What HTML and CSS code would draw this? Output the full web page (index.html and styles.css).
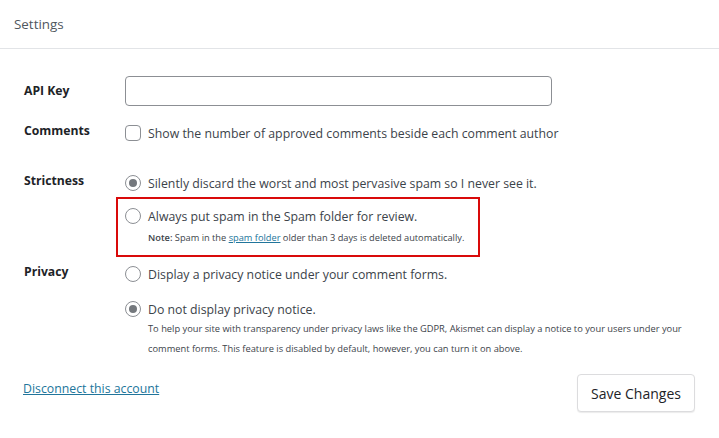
FILE: index.html
```html
<!DOCTYPE html>
<html lang="en">
<head>
<meta charset="utf-8">
<title>Settings</title>
<link rel="stylesheet" href="styles.css">
</head>
<body>
<div class="panel">
  <div class="panel-head">Settings</div>
  <form class="form">
    <div class="row row-api">
      <div class="label">API Key</div>
      <div class="field"><input class="text-input" type="text" aria-label="API Key"></div>
    </div>
    <div class="row row-comments">
      <div class="label">Comments</div>
      <div class="field">
        <label class="option"><span class="checkbox"></span><span class="txt">Show the number of approved comments beside each comment author</span></label>
      </div>
    </div>
    <div class="row row-strict">
      <div class="label">Strictness</div>
      <div class="field">
        <label class="option"><span class="radio checked"></span><span class="txt">Silently discard the worst and most pervasive spam so I never see it.</span></label>
        <div class="highlight">
          <label class="option"><span class="radio"></span><span class="txt">Always put spam in the Spam folder for review.</span></label>
          <p class="note"><strong>Note:</strong> Spam in the <a href="#">spam folder</a> older than 3 days is deleted automatically.</p>
        </div>
      </div>
    </div>
    <div class="row row-privacy">
      <div class="label">Privacy</div>
      <div class="field">
        <label class="option"><span class="radio"></span><span class="txt">Display a privacy notice under your comment forms.</span></label>
        <label class="option option-second"><span class="radio checked"></span><span class="txt">Do not display privacy notice.</span></label>
        <p class="desc">To help your site with transparency under privacy laws like the GDPR, Akismet can display a notice to your users under your comment forms. This feature is disabled by default, however, you can turn it on above.</p>
      </div>
    </div>
    <div class="footer">
      <a class="disconnect" href="#">Disconnect this account</a>
      <button class="save" type="button">Save Changes</button>
    </div>
  </form>
</div>
</body>
</html>
```

FILE: styles.css
```css
html, body {
  margin: 0;
  padding: 0;
  background: #ffffff;
}
body {
  font-family: "Open Sans", "Noto Sans", sans-serif;
  font-size: 12.3px;
  color: #3c434a;
  width: 719px;
  height: 438px;
  overflow: hidden;
}
.panel-head {
  height: 48px;
  line-height: 48px;
  padding-left: 14px;
  border-bottom: 1px solid #e2e4e7;
  color: #50575e;
  font-size: 13.4px;
}
.form {
  margin: 0;
  padding: 0 0 0 24px;
}
.row {
  display: grid;
  grid-template-columns: 101px 1fr;
}
.label {
  font-weight: 700;
  color: #1d2327;
  line-height: 16px;
  font-size: 12.2px;
}
.row-api {
  margin-top: 27px;
  align-items: center;
}
.row-api .label {
  line-height: 30px;
  margin-top: -1px;
}
.text-input {
  display: block;
  box-sizing: border-box;
  width: 427px;
  height: 30px;
  margin: 0;
  border: 1px solid #8c8f94;
  border-radius: 4px;
  background: #fff;
}
.row-comments { margin-top: 17px; }
.row-strict { margin-top: 30px; }
.row-privacy { margin-top: 7px; }
.option {
  display: flex;
  align-items: center;
  gap: 7px;
  line-height: 20px;
  height: 20px;
  white-space: nowrap;
}
.txt {
  line-height: 18px;
  padding-top: 2px;
}
.checkbox {
  box-sizing: border-box;
  width: 16px;
  height: 16px;
  border: 1px solid #8c8f94;
  border-radius: 4px;
  flex: none;
}
.radio {
  box-sizing: border-box;
  width: 16px;
  height: 16px;
  border: 1px solid #8c8f94;
  border-radius: 50%;
  flex: none;
  display: flex;
  align-items: center;
  justify-content: center;
}
.radio.checked::after {
  content: "";
  width: 8px;
  height: 8px;
  border-radius: 50%;
  background: #74787d;
}
.highlight {
  margin: 4px 0 0 -9px;
  width: 353px;
  border: 2px solid #d90a0a;
  padding: 7px 0 8px 7px;
}
.note {
  margin: 3px 0 0 23px;
  font-size: 9.25px;
  line-height: 18px;
  color: #3c434a;
  white-space: nowrap;
}
.note strong { font-weight: 600; }
.note a, .disconnect { color: #21759b; }
.option-second { margin-top: 15px; }
.desc {
  margin: 0 0 0 23px;
  font-size: 9.3px;
  line-height: 20px;
  color: #3c434a;
  width: 540px;
}
.footer {
  display: flex;
  justify-content: space-between;
  align-items: flex-start;
  margin-top: 15px;
  padding-right: 24px;
  margin-left: -1px;
}
.disconnect {
  margin-top: 5px;
  line-height: 20px;
  font-size: 12.3px;
}
.save {
  box-sizing: border-box;
  width: 118px;
  height: 38px;
  border: 1px solid #dcdcde;
  border-radius: 4px;
  background: #fff;
  box-shadow: 0 1px 1px rgba(0,0,0,0.08);
  font-family: inherit;
  font-size: 14px;
  color: #1d2327;
  padding: 0;
}
```
